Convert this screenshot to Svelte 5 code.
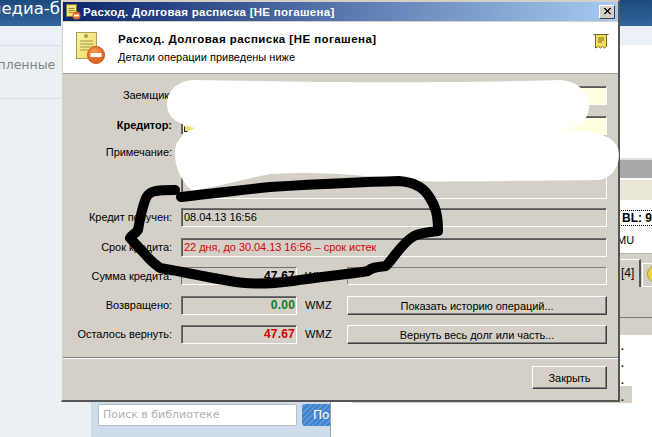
<script>
  const rows = [
    { label: 'Заемщик:', kind: 'yellow' },
    { label: 'Кредитор:', kind: 'yellow', bold: true, icon: true },
    { label: 'Примечание:', kind: 'note' },
    { label: 'Кредит получен:', kind: 'plain', value: '08.04.13 16:56' },
    { label: 'Срок кредита:', kind: 'plain red', value: '22 дня, до 30.04.13 16:56 – срок истек' }
  ];
  const amounts = [
    { label: 'Сумма кредита:', value: '47.67', tone: 'dark', thin: true },
    { label: 'Возвращено:', value: '0.00', tone: 'green', action: 'Показать историю операций...' },
    { label: 'Осталось вернуть:', value: '47.67', tone: 'crimson', action: 'Вернуть весь долг или часть...' }
  ];
</script>

<div class="page">
  <div class="left">
    <div class="topbar"><span>медиа-б</span></div>
    <div class="band"></div>
    <div class="menu-row"><span>закрепленные</span></div>
    <div class="search">
      <div class="search-input">Поиск в библиотеке</div>
      <div class="search-btn">По</div>
    </div>
  </div>
  <div class="right">
    <div class="topbar"></div>
    <div class="band"></div>
    <div class="r-white"></div>
    <div class="r-gray"></div>
    <div class="r-cream"></div>
    <div class="r-info">
      <div class="bl">BL: 97</div>
      <div class="mu">MU</div>
    </div>
    <div class="r-tabs">
      <div class="tab">[4]</div>
      <div class="tab2"><i class="coin"></i></div>
    </div>
    <div class="r-strip"></div>
    <div class="r-dots">
      <div class="dot">.</div><div class="dot">.</div><div class="dot">.</div><div class="dot sel">.</div>
    </div>
  </div>

  <section class="dialog">
    <header class="titlebar">
      <svg class="t-icon" viewBox="0 0 16 16" width="16" height="16">
        <rect x="1.500" y="0.500" width="10" height="12" fill="#f4e27a" stroke="#8a7a30"/>
        <path d="M3.500 4.500h6M3.500 6.500h6M3.500 8.500h5" stroke="#9a8a3a"/>
        <circle cx="11.500" cy="11.500" r="4" fill="#e0661e"/><rect x="9" y="10.500" width="5" height="2" fill="#fff"/>
      </svg>
      <span class="t-text">Расход. Долговая расписка [НЕ погашена]</span>
      <div class="close"><svg viewBox="0 0 16 13" width="16" height="13"><path d="M4.500 2.500l7 7M5.500 2.500l7 7M11.500 2.500l-7 7M12.500 2.500l-7 7" stroke="#000" stroke-width="1.100"/></svg></div>
    </header>
    <div class="head">
      <svg class="h-icon" viewBox="0 0 32 32" width="32" height="32">
        <defs>
          <linearGradient id="sheet" x1="0" y1="0" x2="1" y2="1"><stop offset="0" stop-color="#fbf3a8"/><stop offset="1" stop-color="#eedb62"/></linearGradient>
          <radialGradient id="stop" cx=".4" cy=".3" r=".8"><stop offset="0" stop-color="#f59a50"/><stop offset="1" stop-color="#d9560f"/></radialGradient>
        </defs>
        <rect x="1.500" y="0.500" width="20" height="26" fill="url(#sheet)" stroke="#a8a050"/>
        <circle cx="11" cy="4" r="2" fill="#a8a050"/>
        <path d="M5 9h13M5 12h13M5 15h13M5 18h9" stroke="#a09a50"/>
        <circle cx="21" cy="23" r="8.500" fill="url(#stop)" stroke="#c9581a"/>
        <rect x="15.500" y="21" width="11" height="4" fill="#fff"/>
      </svg>
      <div class="h-text">
        <h1>Расход. Долговая расписка [НЕ погашена]</h1>
        <p>Детали операции приведены ниже</p>
      </div>
      <svg class="h-note" viewBox="0 0 16 16" width="16" height="16">
        <path d="M0.500 1.500h15" stroke="#555"/>
        <path d="M2.500 1.500h11v12l-2 1.500-2-1.500-2 1.500-2-1.500-3 1.500z" fill="#f2dc5a" stroke="#7a6a20"/>
        <path d="M5 5h6M5 7h6M5 9h4" stroke="#7a6a20"/>
      </svg>
    </div>

    <div class="form">
      {#each rows as r}
        <div class="row" class:note-row={r.kind === 'note'}>
          <div class="label" class:strong={r.bold}>{r.label}</div>
          <div class="field {r.kind}">
            {#if r.icon}<i class="wallet"></i>{/if}
            {#if r.value}{r.value}{/if}
          </div>
        </div>
      {/each}
      {#each amounts as a}
        <div class="row">
          <div class="label">{a.label}</div>
          <div class="amount {a.tone}" class:thin={a.thin}>{a.value}</div>
          <div class="unit">WMZ</div>
          {#if a.action}
            <button class="btn wide">{a.action}</button>
          {:else}
            <div class="field-empty"></div>
          {/if}
        </div>
      {/each}
    </div>

    <div class="foot">
      <button class="btn closebtn">Закрыть</button>
    </div>
  </section>

  <svg class="marks" viewBox="0 0 652 437" width="652" height="437">
    <path fill="#fff" d="M195 80C300 82 420 84 560 80C585 82 590 100 589 108C588 120 580 127 560 130C585 131 612 132 618 148C622 165 612 178 600 180C520 181 440 182 400 181C350 172 300 172 270 174C240 180 210 188 192 191C180 180 174 165 175 150C176 140 185 131 195 128C178 124 167 118 167 104C168 90 178 80 195 80Z"/>
    <path fill="none" stroke="#000" stroke-width="10" stroke-linejoin="round" stroke-linecap="round" d="M181 197C195 195 225 192 270 187C320 184 360 182 399 181C412 182 422 186 428 195C436 206 438 216 438 231C428 232 420 233 414 236C402 243 396 255 386 266C378 267 372 267 368 271C350 274 320 277 293 281C270 284 245 284 230 281C205 277 185 272 160 268C152 262 148 258 145 254C138 247 133 241 130 238C132 235 135 234 138 230C140 218 142 208 146 198C148 194 150 192 156 191C162 190 168 190 175 190"/>
  </svg>
</div>

<style>
  :global(body) { margin: 0; }
  .page {
    position: relative;
    width: 652px;
    height: 437px;
    overflow: hidden;
    display: flex;
    background: #fff;
    font-family: "Liberation Sans", Arial, sans-serif;
    font-size: 11px;
    color: #000;
  }
  .left {
    width: 330px;
    display: flex;
    flex-direction: column;
    background: #ebf0f3;
    border-right: 1px solid #9aa0a6;
    box-sizing: content-box;
  }
  .right { flex: 1; display: flex; flex-direction: column; min-width: 0; overflow: hidden; }
  .topbar {
    height: 26px;
    background: linear-gradient(#1c4a7e, #33669b);
    color: #fff;
    font-family: "DejaVu Sans", sans-serif;
    font-size: 16.500px;
    line-height: 17px;
    flex: none;
    overflow: hidden;
  }
  .topbar span { display: block; margin-left: -11px; white-space: nowrap; font-weight: 400; }
  .band { height: 19px; background: #ebf1f6; flex: none; }
  .left .band { border-bottom: 1px solid #d8dee2; }
  .menu-row {
    height: 52px;
    flex: none;
    border-bottom: 1px solid #d8dee2;
    color: #7d8488;
    font-family: "DejaVu Sans", sans-serif;
    font-size: 12.500px;
    line-height: 38px;
    overflow: hidden;
  }
  .menu-row span { display: block; margin-left: -40px; white-space: nowrap; }
  .search {
    margin-top: auto;
    margin-left: 91px;
    height: 36px;
    padding: 3px 0 0 7px;
    box-sizing: border-box;
    background: #cfdcec;
    display: flex;
    gap: 5px;
    align-items: flex-start;
  }
  .search-input {
    width: 199px;
    height: 22px;
    box-sizing: border-box;
    background: #fff;
    border: 1px solid #b4bcc6;
    border-radius: 2px;
    color: #b0b0b0;
    font-family: "DejaVu Sans", sans-serif;
    font-size: 11px;
    line-height: 20px;
    padding-left: 4px;
  }
  .search-btn {
    flex: 1;
    height: 22px;
    background: repeating-linear-gradient(135deg, #3f82cb 0 2px, #5a97d8 2px 4px);
    border-radius: 3px 0 0 3px;
    color: #fff;
    font-family: "DejaVu Sans", sans-serif;
    font-size: 12px;
    line-height: 22px;
    padding-left: 11px;
  }
  .r-white { height: 113px; flex: none; background: #fff; border-bottom: 2px solid #e0e0e0; }
  .r-gray { height: 18px; background: #a9a9a9; flex: none; }
  .r-cream { height: 20px; margin-top: 2px; background: #eae7d8; flex: none; }
  .r-info { height: 53px; flex: none; padding: 10px 0 0 290px; box-sizing: border-box; }
  .bl {
    border-top: 1px dotted #000;
    border-bottom: 1px dotted #000;
    font-family: "Liberation Sans", Arial, sans-serif;
    font-weight: 700;
    font-size: 12px;
    line-height: 14px;
    white-space: nowrap;
    padding-left: 1px;
  }
  .mu { margin-left: -4px; font-size: 11px; margin-top: 8px; }
  .r-tabs {
    height: 64px;
    flex: none;
    display: flex;
    align-items: flex-start;
    padding-left: 288px;
    background: #d4d0c8;
    border-top: 1px solid #b8b5ae;
    box-sizing: border-box;
  }
  .tab { width: 22px; padding-left: 2px; line-height: 26px; font-size: 12px; border-right: 2px solid #555; box-sizing: border-box; border-top: 1px solid #fff; margin-top: 5px; height: 28px; flex: none; }
  .tab2 { flex: 1; display: flex; margin: 9px 0 0 1px; padding-left: 4px; height: 24px; box-sizing: border-box; border-left: 1px solid #fff; border-bottom: 1px solid #fff; border-top: 1px solid #fff; }
  .coin { width: 18px; height: 18px; margin-top: 1px; border-radius: 50%; background: #f0d43a; border: 1px solid #a89a50; flex: none; box-sizing: border-box; }
  .r-strip { height: 18px; flex: none; background: #d4d0c8; border-top: 1px solid #777; box-sizing: border-box; }
  .dot { height: 17px; line-height: 23px; font-weight: 700; font-size: 10px; padding-left: 290px; }
  .dot.sel { background: #d4d0c8; margin-left: 21px; width: 280px; padding-left: 269px; box-sizing: border-box; }

  .dialog {
    position: absolute;
    left: 61px;
    top: 0;
    width: 559px;
    height: 402px;
    box-sizing: border-box;
    display: flex;
    flex-direction: column;
    background: #d4d0c8;
    border: 1px solid #d4d0c8;
    border-left-color: #eee;
    border-right: 2px solid #555;
    border-bottom: 2px solid #555;
    padding: 1px 0 0 1px;
  }
  .titlebar {
    height: 19px;
    flex: none;
    display: flex;
    align-items: center;
    gap: 2px;
    padding: 0 3px 0 2px;
    background: linear-gradient(90deg, #0a246a, #a6caf0);
  }
  .t-icon { flex: none; }
  .t-text { flex: 1; color: #fff; font-weight: 700; font-size: 11.500px; letter-spacing: .27px; white-space: nowrap; }
  .close {
    width: 16px;
    height: 14px;
    background: #d4d0c8;
    border: 1px solid;
    border-color: #fff #404040 #404040 #fff;
    box-sizing: border-box;
    display: flex;
    align-items: center;
    justify-content: center;
    overflow: hidden;
  }
  .head {
    height: 52px;
    margin-top: 1px;
    flex: none;
    box-sizing: border-box;
    background: #fff;
    border-bottom: 1px solid #a0a0a0;
    display: flex;
    align-items: flex-start;
    padding: 10px 9px 0 12px;
    gap: 11px;
  }
  .h-text { flex: 1; }
  h1 { margin: 0; font-size: 11.500px; font-weight: 700; letter-spacing: .45px; line-height: 14px; }
  p { margin: 4px 0 0; font-size: 11px; line-height: 14px; }
  .h-note { margin-top: 1px; }

  .form {
    display: flex;
    flex-direction: column;
    gap: 10px;
    padding: 12px 11px 13px 0;
    border-bottom: 1px solid #808080;
    box-shadow: 0 1px 0 #fff;
  }
  .row { display: flex; height: 19px; align-items: stretch; gap: 9px; }
  .row:nth-child(2), .row:nth-child(5) { margin-top: 1px; }
  .row:nth-child(4) { margin-top: -1px; }
  .row.note-row { height: 54px; }
  .label { width: 109px; flex: none; text-align: right; line-height: 19px; white-space: nowrap; letter-spacing: -.05px; }
  .note-row .label { line-height: 14px; }
  .label.strong { font-weight: 700; }
  .field {
    flex: 1;
    box-sizing: border-box;
    border: 1px solid;
    border-color: #6f6f6f #fff #fff #6f6f6f;
    box-shadow: inset 1px 1px 0 #555;
    padding: 0 2px;
    line-height: 17px;
    letter-spacing: -.05px;
  }
  .field.yellow { background: #ffffe1; }
  .field.red { color: #d40000; }
  .wallet { display: block; width: 16px; height: 4px; margin-top: 9px; background: #f0dc70; border: 1px solid #222; border-top-color: #f0dc70; border-right-color: #f0dc70; }
  .amount {
    width: 116px;
    flex: none;
    box-sizing: border-box;
    border: 1px solid;
    border-color: #6f6f6f #fff #fff #6f6f6f;
    box-shadow: inset 1px 1px 0 #555;
    text-align: right;
    padding-right: 1px;
    font-weight: 700;
    line-height: 17px;
    font-size: 12px;
    letter-spacing: .2px;
  }
  .amount.thin { box-shadow: none; height: 18px; }
  .green { color: #0f7a2a; }
  .crimson { color: #d40000; }
  .unit { width: 33px; flex: none; margin-left: -1px; line-height: 19px; letter-spacing: .2px; }
  .field-empty {
    flex: 1;
    height: 18px;
    box-sizing: border-box;
    border: 1px solid;
    border-color: #808080 #fff #fff #808080;
  }
  .btn {
    box-sizing: border-box;
    background: #d4d0c8;
    border: 1px solid;
    border-color: #fff #404040 #404040 #fff;
    box-shadow: inset -1px -1px 0 #808080;
    font: inherit;
    color: #000;
    padding: 0;
    letter-spacing: -.05px;
  }
  .btn.wide { flex: 1; }
  .foot { flex: 1; display: flex; justify-content: flex-end; align-items: flex-start; padding: 8px 11px 0 0; }
  .closebtn { width: 75px; height: 23px; }
  .marks { position: absolute; left: 0; top: 0; pointer-events: none; }
</style>
